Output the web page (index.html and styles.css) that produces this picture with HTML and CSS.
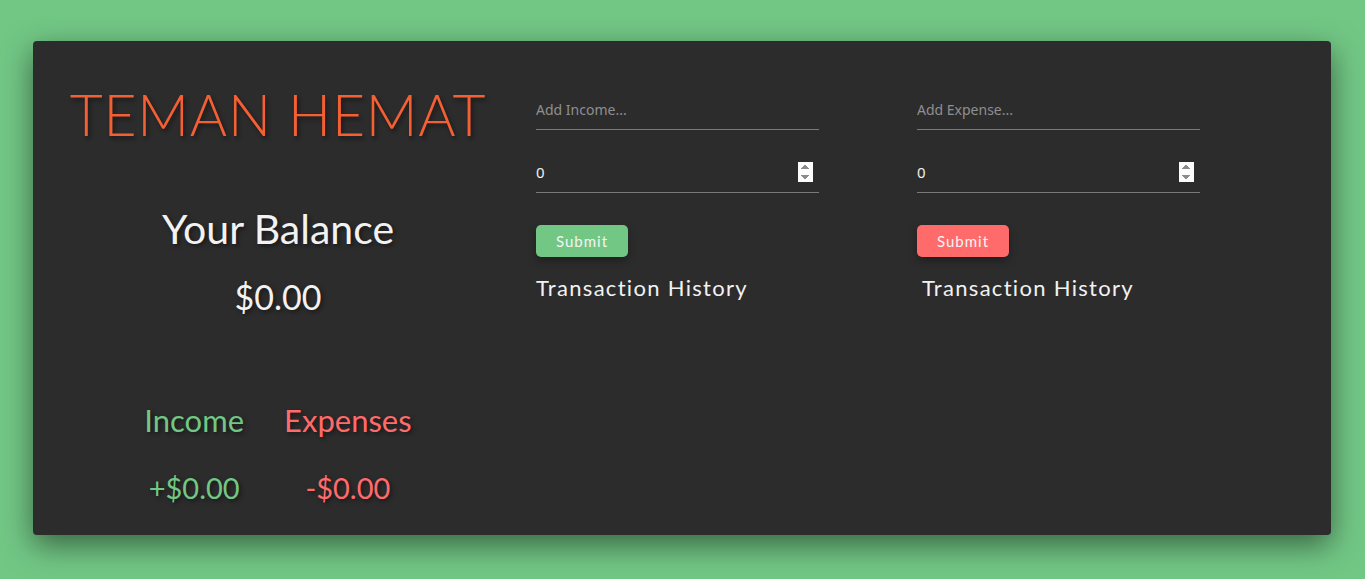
FILE: index.html
```html
<!DOCTYPE html>
<html lang="en">
<head>
<meta charset="utf-8">
<title>Teman Hemat</title>
<link rel="stylesheet" href="styles.css">
</head>
<body>
<main class="card">
  <section class="summary">
    <h1 class="brand">TEMAN HEMAT</h1>
    <h2 class="balance-label">Your Balance</h2>
    <div class="balance-value">$0.00</div>
    <div class="totals">
      <div class="total total-income">
        <h3 class="total-label">Income</h3>
        <div class="total-value">+$0.00</div>
      </div>
      <div class="total total-expense">
        <h3 class="total-label">Expenses</h3>
        <div class="total-value">-$0.00</div>
      </div>
    </div>
  </section>
  <section class="entry entry-income">
    <form class="entry-form">
      <input class="field" type="text" placeholder="Add Income...">
      <input class="field field-num" type="number" value="0">
      <button class="btn btn-income" type="button">Submit</button>
    </form>
    <h4 class="history">Transaction History</h4>
  </section>
  <section class="entry entry-expense">
    <form class="entry-form">
      <input class="field" type="text" placeholder="Add Expense...">
      <input class="field field-num" type="number" value="0">
      <button class="btn btn-expense" type="button">Submit</button>
    </form>
    <h4 class="history history-expense">Transaction History</h4>
  </section>
</main>
</body>
</html>
```

FILE: styles.css
```css
* { box-sizing: border-box; }

html, body {
  margin: 0;
  padding: 0;
}

body {
  background: #72c785;
  font-family: "Lato", "Noto Sans", sans-serif;
  color: #eeeeee;
  height: 579px;
  overflow: hidden;
  padding: 41px 34px 0 33px;
}

.card {
  height: 494px;
  background: #2c2c2c;
  border-radius: 4px;
  box-shadow: 0 10px 30px rgba(0, 0, 0, 0.5);
  display: flex;
  align-items: flex-start;
}

.summary {
  width: 490px;
  flex: none;
  text-align: center;
  padding-top: 38px;
  margin-right: 13px;
}

.brand {
  margin: 0;
  font-weight: 300;
  font-size: 57px;
  line-height: 70px;
  color: #f45f33;
  letter-spacing: 0.8px;
  text-shadow: 2px 3px 4px rgba(0, 0, 0, 0.45);
}

.balance-label {
  margin: 56px 0 0;
  font-weight: 400;
  font-size: 41px;
  line-height: 48px;
  color: #f2f2f2;
  text-shadow: 2px 2px 4px rgba(0, 0, 0, 0.5);
}

.balance-value {
  margin-top: 23px;
  font-size: 34px;
  line-height: 42px;
  color: #f2f2f2;
  text-shadow: 2px 2px 4px rgba(0, 0, 0, 0.5);
}

.totals {
  display: flex;
  justify-content: center;
  gap: 40px;
  margin-top: 84px;
}

.total-label {
  margin: 0;
  font-weight: 400;
  font-size: 31px;
  line-height: 36px;
  text-shadow: 2px 2px 4px rgba(0, 0, 0, 0.5);
}

.total-value {
  margin-top: 32px;
  font-size: 29px;
  line-height: 36px;
  text-shadow: 2px 2px 4px rgba(0, 0, 0, 0.5);
}

.total-income { color: #72c785; }
.total-expense { color: #ff6b6b; }

.entry {
  padding-top: 56px;
  width: 381px;
  flex: none;
}

.entry-form {
  width: 283px;
  display: flex;
  flex-direction: column;
  align-items: flex-start;
}

.field {
  width: 283px;
  height: 33px;
  background: transparent;
  border: none;
  border-bottom: 1px solid #7a7a7a;
  color: #f0f0f0;
  font-family: "Noto Sans", sans-serif;
  font-size: 14px;
  padding: 0 0 7px;
  outline: none;
}

.field::placeholder { color: #8f8f8f; }

.field-num {
  margin-top: 30px;
  padding: 0 6px 9px 0;
  font-size: 15px;
}

.field-num::-webkit-inner-spin-button,
.field-num::-webkit-outer-spin-button {
  opacity: 1;
}

.btn {
  margin-top: 32px;
  width: 92px;
  height: 32px;
  border: none;
  border-radius: 5px;
  color: #f4f4f4;
  font-family: "Lato", sans-serif;
  font-size: 15px;
  letter-spacing: 1px;
  box-shadow: 0 4px 8px rgba(0, 0, 0, 0.3);
  cursor: pointer;
}

.btn-income { background: #72c785; }
.btn-expense { background: #ff6b6b; }

.history {
  margin: 16px 0 0;
  font-weight: 400;
  font-size: 22px;
  line-height: 30px;
  letter-spacing: 1.3px;
  color: #f2f2f2;
}

.history-expense { padding-left: 5px; }
```
